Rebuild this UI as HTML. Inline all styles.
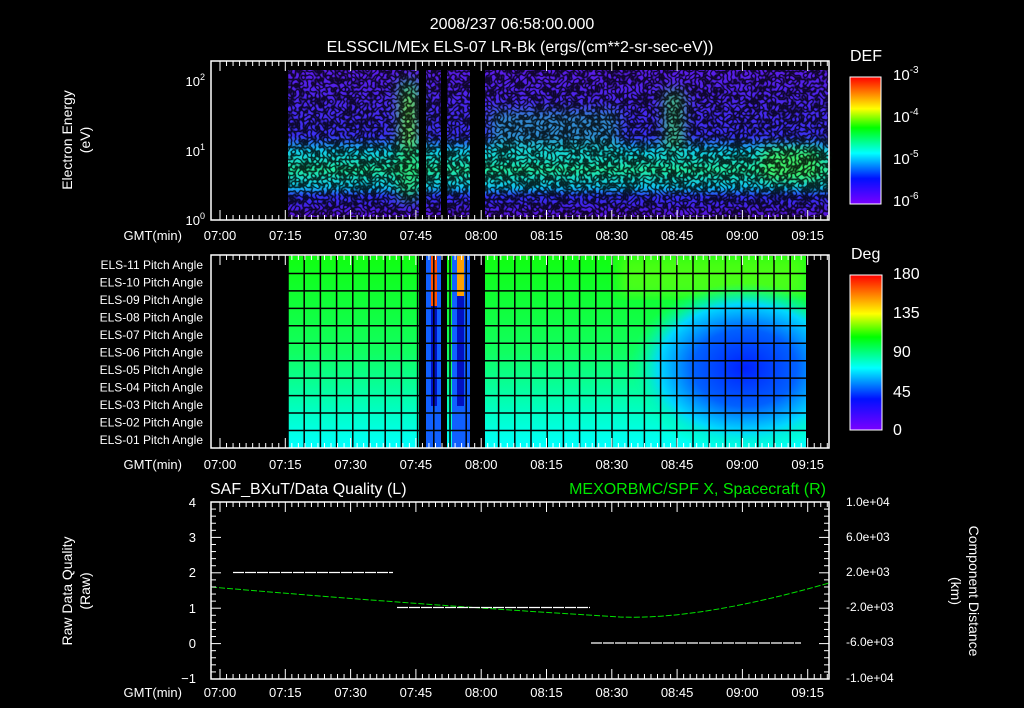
<!DOCTYPE html>
<html><head><meta charset="utf-8">
<style>
html,body{margin:0;padding:0;background:#000;width:1024px;height:708px;overflow:hidden}
svg{display:block}
text{font-family:"Liberation Sans",sans-serif;fill:#fff}
</style></head><body>
<svg id="s" width="1024" height="708" viewBox="0 0 1024 708" xmlns="http://www.w3.org/2000/svg">
<defs>
<linearGradient id="rb" x1="0" y1="1" x2="0" y2="0">
<stop offset="0" stop-color="#7a00ff"/><stop offset="0.2" stop-color="#0010ff"/><stop offset="0.4" stop-color="#00ffff"/><stop offset="0.6" stop-color="#00ff00"/><stop offset="0.75" stop-color="#ffff00"/><stop offset="1" stop-color="#ff0000"/>
</linearGradient>
<linearGradient id="band" x1="0" y1="0" x2="0" y2="1">
<stop offset="0" stop-color="#5a1ce8"/><stop offset="0.45" stop-color="#3a30f0"/><stop offset="0.55" stop-color="#10c8e8"/><stop offset="0.68" stop-color="#20e8a0"/><stop offset="0.8" stop-color="#10c0f0"/><stop offset="0.86" stop-color="#3030f0"/><stop offset="1" stop-color="#5a10d8"/>
</linearGradient>
<radialGradient id="blob" cx="0.5" cy="0.5" r="0.5">
<stop offset="0" stop-color="#0020ff"/><stop offset="0.45" stop-color="#0060ff"/><stop offset="0.75" stop-color="#00d8ff"/><stop offset="1" stop-color="#00ffa0" stop-opacity="0"/>
</radialGradient>
<linearGradient id="pg" x1="0" y1="0" x2="0" y2="1">
<stop offset="0" stop-color="#10ff10"/><stop offset="0.5" stop-color="#10ff60"/><stop offset="0.8" stop-color="#00ffc0"/><stop offset="1" stop-color="#00ffff"/>
</linearGradient>
<clipPath id="pc"><rect x="288" y="256" width="518" height="192"/></clipPath>
<filter id="bl"><feGaussianBlur stdDeviation="6"/></filter>
<filter id="nz"><feTurbulence type="turbulence" baseFrequency="0.25" numOctaves="1" seed="5"/><feColorMatrix type="matrix" values="0 0 0 0 0  0 0 0 0 0  0 0 0 0 0  0 0 0 -4 1.3"/></filter>
</defs>
<text x="512" y="29" font-size="16" text-anchor="middle">2008/237 06:58:00.000</text>
<text x="520" y="52" font-size="16" text-anchor="middle">ELSSCIL/MEx ELS-07 LR-Bk  (ergs/(cm**2-sr-sec-eV))</text>

<rect x="288" y="70" width="541" height="147" fill="url(#band)"/>
<g filter="url(#bl)">
<rect x="398" y="80" width="22" height="120" fill="#30e070" opacity="0.8"/>
<rect x="402" y="95" width="12" height="50" fill="#a0ff20" opacity="0.6"/>
<rect x="490" y="110" width="130" height="45" fill="#20e8b0" opacity="0.5"/>
<rect x="663" y="90" width="22" height="60" fill="#40f060" opacity="0.7"/>
<rect x="762" y="148" width="58" height="32" fill="#40f060" opacity="0.9"/>
</g>
<rect x="288" y="70" width="541" height="147" filter="url(#nz)" opacity="0.8"/>
<rect x="419" y="70" width="7" height="147" fill="#000"/>
<rect x="441" y="70" width="6" height="147" fill="#000"/>
<rect x="470" y="70" width="15" height="147" fill="#000"/>
<rect x="211" y="61" width="618" height="159" fill="none" stroke="#fff" stroke-width="1.5"/>
<text x="205" y="86" font-size="13" text-anchor="end">10<tspan font-size="9" dy="-6">2</tspan></text>
<text x="205" y="156" font-size="13" text-anchor="end">10<tspan font-size="9" dy="-6">1</tspan></text>
<text x="205" y="225" font-size="13" text-anchor="end">10<tspan font-size="9" dy="-6">0</tspan></text>
<text transform="translate(72,140) rotate(-90)" font-size="14" text-anchor="middle">Electron Energy</text>
<text transform="translate(90,140) rotate(-90)" font-size="14" text-anchor="middle">(eV)</text>
<rect x="850" y="77" width="31" height="127" fill="url(#rb)" stroke="#fff"/>
<text x="850" y="61" font-size="16">DEF</text>
<text x="893" y="80" font-size="15">10<tspan font-size="10" dy="-7">-3</tspan></text>
<text x="893" y="122" font-size="15">10<tspan font-size="10" dy="-7">-4</tspan></text>
<text x="893" y="164" font-size="15">10<tspan font-size="10" dy="-7">-5</tspan></text>
<text x="893" y="206" font-size="15">10<tspan font-size="10" dy="-7">-6</tspan></text>

<g clip-path="url(#pc)">
<rect x="288" y="256" width="518" height="192" fill="url(#pg)"/>
<rect x="620" y="256" width="186" height="40" fill="#80ff10" opacity="0.5" filter="url(#bl)"/>
<ellipse cx="745" cy="368" rx="115" ry="85" fill="url(#blob)"/>
<rect x="425" y="256" width="16" height="192" fill="#1060ff"/>
<rect x="431" y="256" width="6" height="150" fill="#0010c0"/>
<rect x="431" y="256" width="6" height="50" fill="#ff5000"/>
<rect x="452" y="256" width="18" height="192" fill="#1060ff"/>
<rect x="457" y="256" width="7" height="150" fill="#0010c0"/>
<rect x="457" y="256" width="7" height="40" fill="#ffa000"/>
<rect x="419" y="256" width="7" height="192" fill="#000"/>
<rect x="441" y="256" width="6" height="192" fill="#000"/>
<rect x="470" y="256" width="15" height="192" fill="#000"/>
<g id="grid"></g>
</g>
<rect x="211" y="255" width="618" height="193" fill="none" stroke="#fff" stroke-width="1.5"/>
<g id="plab" font-size="12"></g>
<rect x="850" y="275" width="32" height="155" fill="url(#rb)" stroke="#fff"/>
<text x="851" y="259" font-size="16">Deg</text>
<text x="893" y="279" font-size="16">180</text>
<text x="893" y="318" font-size="16">135</text>
<text x="893" y="357" font-size="16">90</text>
<text x="893" y="397" font-size="16">45</text>
<text x="893" y="435" font-size="16">0</text>

<text x="210" y="494" font-size="16">SAF_BXuT/Data Quality (L)</text>
<text x="826" y="494" font-size="16" text-anchor="end" style="fill:#00e800">MEXORBMC/SPF X, Spacecraft (R)</text>
<rect x="211" y="502" width="618" height="177" fill="none" stroke="#fff" stroke-width="1.5"/>
<path d="M211 587 Q 420 605 620 617 Q 700 620 829 583" fill="none" stroke="#00e000" stroke-width="1" stroke-dasharray="6 2"/>
<path d="M233 572.5H393M397 607.5H590M591 643H801M804 607" stroke="#fff" stroke-width="1.2" stroke-dasharray="11 1"/>
<g font-size="13" text-anchor="end">
<text x="196" y="507">4</text><text x="196" y="542">3</text><text x="196" y="577">2</text><text x="196" y="613">1</text><text x="196" y="648">0</text><text x="196" y="683">−1</text>
</g>
<g font-size="12">
<text x="846" y="506">1.0e+04</text><text x="846" y="541">6.0e+03</text><text x="846" y="576">2.0e+03</text><text x="846" y="611">-2.0e+03</text><text x="846" y="646">-6.0e+03</text><text x="846" y="682">-1.0e+04</text>
</g>
<text transform="translate(72,591) rotate(-90)" font-size="14" text-anchor="middle">Raw Data Quality</text>
<text transform="translate(90,591) rotate(-90)" font-size="14" text-anchor="middle">(Raw)</text>
<text transform="translate(969,591) rotate(90)" font-size="14" text-anchor="middle">Component Distance</text>
<text transform="translate(951,591) rotate(90)" font-size="14" text-anchor="middle">(km)</text>
<g id="ticks"></g>
</svg>
<script>
var NS="http://www.w3.org/2000/svg";
function el(p,t,a,txt){var e=document.createElementNS(NS,t);for(var k in a)e.setAttribute(k,a[k]);if(txt)e.textContent=txt;document.getElementById(p).appendChild(e);return e;}
for(var x=288;x<=806;x+=16.2)el("grid","line",{x1:x,y1:256,x2:x,y2:448,stroke:"#000","stroke-width":1.5});
for(var i=1;i<11;i++){var y=256+i*17.45;el("grid","line",{x1:288,y1:y,x2:806,y2:y,stroke:"#000","stroke-width":1.5});}
var labs=["11","10","09","08","07","06","05","04","03","02","01"];
for(var i=0;i<11;i++){el("plab","text",{x:203,y:269+i*17.5,"text-anchor":"end","font-size":12},"ELS-"+labs[i]+" Pitch Angle");}
var tl=["07:00","07:15","07:30","07:45","08:00","08:15","08:30","08:45","09:00","09:15"];
[[61,220,240],[255,448,469],[502,679,697]].forEach(function(p){
 el("ticks","text",{x:182,y:p[2],"text-anchor":"end","font-size":13},"GMT(min)");
 for(var i=0;i<10;i++){el("ticks","text",{x:220+i*65.3,y:p[2],"text-anchor":"middle","font-size":13},tl[i]);}
 for(var x=220;x<829;x+=6.53){var big=Math.abs(((x-220)/65.3)-Math.round((x-220)/65.3))<0.05;var l=big?10:5;
  el("ticks","line",{x1:x,y1:p[0],x2:x,y2:p[0]+l,stroke:"#fff"});el("ticks","line",{x1:x,y1:p[1],x2:x,y2:p[1]-l,stroke:"#fff"});}
});
for(var i=0;i<=25;i++){var y=502+i*7.08;var l=(i%5==0)?10:5;el("ticks","line",{x1:211,y1:y,x2:211+l,y2:y,stroke:"#fff"});el("ticks","line",{x1:829,y1:y,x2:829-l,y2:y,stroke:"#fff"});}
</script>
</body></html>
